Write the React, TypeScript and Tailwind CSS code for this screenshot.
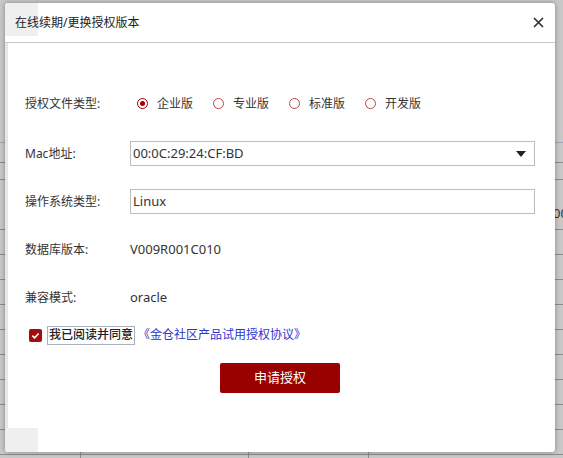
const editions = ["企业版", "专业版", "标准版", "开发版"];

// rows of the list page that sits behind the dialog
const pageRows = [
  "h-[20px] border-t border-[#9fa8b4]",
  "h-[17px] border-t border-[#8c8c8c]",
  "h-[50px] border-t border-[#8c8c8c]",
  "h-[25px] border-t border-[#8c8c8c]",
  "h-[25px] border-t border-[#8c8c8c]",
  "h-[25px] border-t border-[#8c8c8c]",
  "h-[25px] border-t border-[#8c8c8c]",
  "h-[25px] border-t border-[#8c8c8c]",
  "h-[25px] border-t border-[#8c8c8c]",
  "h-[25px] border-t border-[#8c8c8c]",
  "h-[25px] border-t border-[#8c8c8c]",
  "h-[25px] border-t border-[#8c8c8c]",
  "h-[25px] border-t border-[#8c8c8c]",
];

function PageBehind() {
  return (
    <div className="flex flex-col pt-[142px]">
      {pageRows.map((cls, i) => (
        <div key={i} className={`${cls} grid grid-cols-[80px_168px_120px_1fr]`}>
          <div />
          <div className="border-l border-[#8c8c8c]" />
          <div className="border-l border-[#8c8c8c]" />
          <div className="border-l border-[#8c8c8c] flex items-center">
            {i === 2 && (
              <span className="ml-[184px] mt-[18px] text-[13px] text-[#333] font-['Noto_Sans',sans-serif]">000</span>
            )}
          </div>
        </div>
      ))}
    </div>
  );
}

function Radio({ label, checked }: { label: string; checked?: boolean }) {
  return (
    <label className="flex items-center gap-[9px]">
      <span className={`w-[11px] h-[11px] rounded-full border flex items-center justify-center ${checked ? "border-[#a00000]" : "border-[#b24a4a]"}`}>
        {checked && <span className="w-[5px] h-[5px] rounded-full bg-[#a00000]" />}
      </span>
      <span className="text-[12px] text-[#333]">{label}</span>
    </label>
  );
}

function Row({ label, children }: { label: string; children: React.ReactNode }) {
  return (
    <div className="flex items-center h-[25px]">
      <div className="w-[105px] text-[12px] text-[#333]">{label}</div>
      <div className="flex-1 flex items-center h-full">{children}</div>
    </div>
  );
}

export default function App() {
  return (
    <div className="relative w-[563px] h-[458px] overflow-hidden bg-[#c8c8c8] font-['Noto_Sans','Noto_Sans_CJK_SC',sans-serif]">
      <PageBehind />

      {/* dialog */}
      <div className="absolute left-[5px] top-[3px] w-[550px] h-[449px] bg-white rounded-[3px] shadow-[0_0_5px_rgba(0,0,0,0.35)] flex flex-col overflow-hidden">
        <div className="relative h-[40px] shrink-0 border-b border-[#c8c8c8] flex items-center px-[10px]">
          <div className="absolute left-0 top-0 w-[33px] h-[33px] bg-[#efefef]" />
          <span className="relative text-[12px] text-[#222]">在线续期/更换授权版本</span>
          <button className="ml-auto mr-[1px] w-[11px] h-[11px]">
            <svg viewBox="0 0 11 11" className="w-[11px] h-[11px]">
              <path d="M1 1L10 10M10 1L1 10" stroke="#333" strokeWidth="1.7" />
            </svg>
          </button>
        </div>

        <div className="relative flex-1 flex flex-col px-[20px] pt-[48px] shadow-[inset_3px_0_0_#e6e6e6]">
          <Row label="授权文件类型:">
            <div className="flex items-center gap-[20px] ml-[7px]">
              {editions.map((e, i) => (
                <Radio key={e} label={e} checked={i === 0} />
              ))}
            </div>
          </Row>

          <div className="mt-[25px]">
            <Row label="Mac地址:">
              <div className="w-full h-full border border-[#bdbdbd] flex items-center pl-[2px] pr-[8px]">
                <span className="text-[13px] text-[#333]">00:0C:29:24:CF:BD</span>
                <svg viewBox="0 0 10 6" className="ml-auto w-[10px] h-[6px]">
                  <path d="M0 0H10L5 6Z" fill="#222" />
                </svg>
              </div>
            </Row>
          </div>

          <div className="mt-[23px]">
            <Row label="操作系统类型:">
              <div className="w-full h-full border border-[#bdbdbd] flex items-center pl-[2px]">
                <span className="text-[13px] text-[#333]">Linux</span>
              </div>
            </Row>
          </div>

          <div className="mt-[23px]">
            <Row label="数据库版本:">
              <span className="text-[13px] text-[#333]">V009R001C010</span>
            </Row>
          </div>

          <div className="mt-[23px]">
            <Row label="兼容模式:">
              <span className="text-[13px] text-[#333]">oracle</span>
            </Row>
          </div>

          <div className="mt-[13px] h-[24px] flex items-center pl-[4px]">
            <span className="w-[13px] h-[13px] rounded-[2px] bg-[#a10c0c] flex items-center justify-center">
              <svg viewBox="0 0 10 10" className="w-[9px] h-[9px]">
                <path d="M1.5 5.2L4 7.5L8.5 2.8" stroke="#fff" strokeWidth="1.8" fill="none" />
              </svg>
            </span>
            <span className="ml-[5px] h-[19px] px-[1px] border border-[#a9b0bb] flex items-center text-[12px] font-medium text-[#222]">
              我已阅读并同意
            </span>
            <a className="ml-[3px] text-[12px] text-[#2b35cf]">《金仓社区产品试用授权协议》</a>
          </div>

          <button className="mt-[16px] self-center w-[120px] h-[30px] rounded-[2px] bg-[#990000] text-white text-[13px]">
            申请授权
          </button>

          <div className="absolute left-0 bottom-0 w-[33px] h-[24px] bg-[#efefef]" />
        </div>
      </div>
    </div>
  );
}
